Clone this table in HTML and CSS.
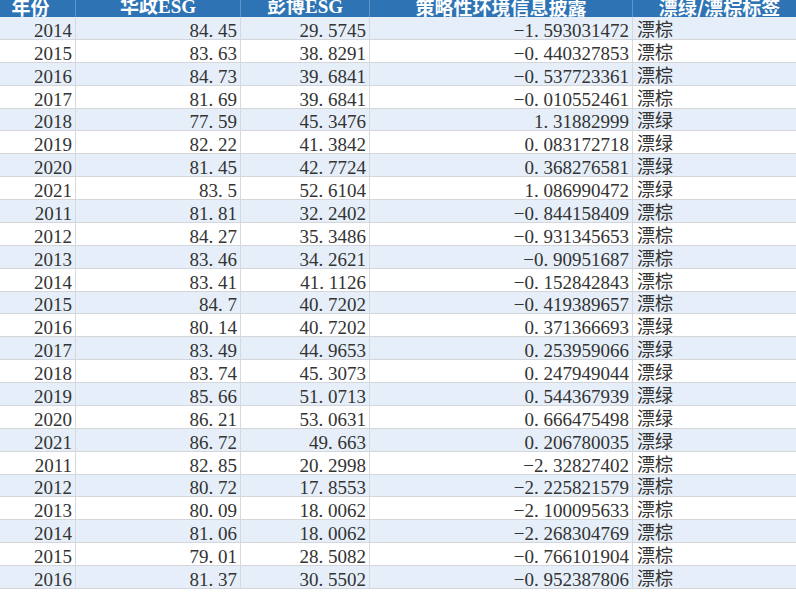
FILE: index.html
```html
<!DOCTYPE html>
<html lang="zh">
<head>
<meta charset="utf-8">
<title>ESG 表</title>
<link rel="stylesheet" href="styles.css">
</head>
<body>
<table class="sheet">
  <colgroup>
    <col class="c1"><col class="c2"><col class="c3"><col class="c4"><col class="c5">
  </colgroup>
  <thead>
    <tr>
      <th><div class="hd"><span>年份</span></div></th>
      <th><div class="hd"><span>华政<b>ESG</b></span></div></th>
      <th><div class="hd"><span>彭博<b>ESG</b></span></div></th>
      <th><div class="hd"><span>策略性环境信息披露</span></div></th>
      <th><div class="hd"><span>漂绿/漂棕标签</span></div></th>
    </tr>
  </thead>
  <tbody>
    <tr><td>2014</td><td>84<i>.</i>45</td><td>29<i>.</i>5745</td><td>−1<i>.</i>593031472</td><td class="t">漂棕</td></tr>
    <tr><td>2015</td><td>83<i>.</i>63</td><td>38<i>.</i>8291</td><td>−0<i>.</i>440327853</td><td class="t">漂棕</td></tr>
    <tr><td>2016</td><td>84<i>.</i>73</td><td>39<i>.</i>6841</td><td>−0<i>.</i>537723361</td><td class="t">漂棕</td></tr>
    <tr><td>2017</td><td>81<i>.</i>69</td><td>39<i>.</i>6841</td><td>−0<i>.</i>010552461</td><td class="t">漂棕</td></tr>
    <tr><td>2018</td><td>77<i>.</i>59</td><td>45<i>.</i>3476</td><td>1<i>.</i>31882999</td><td class="t">漂绿</td></tr>
    <tr><td>2019</td><td>82<i>.</i>22</td><td>41<i>.</i>3842</td><td>0<i>.</i>083172718</td><td class="t">漂绿</td></tr>
    <tr><td>2020</td><td>81<i>.</i>45</td><td>42<i>.</i>7724</td><td>0<i>.</i>368276581</td><td class="t">漂绿</td></tr>
    <tr><td>2021</td><td>83<i>.</i>5</td><td>52<i>.</i>6104</td><td>1<i>.</i>086990472</td><td class="t">漂绿</td></tr>
    <tr><td>2011</td><td>81<i>.</i>81</td><td>32<i>.</i>2402</td><td>−0<i>.</i>844158409</td><td class="t">漂棕</td></tr>
    <tr><td>2012</td><td>84<i>.</i>27</td><td>35<i>.</i>3486</td><td>−0<i>.</i>931345653</td><td class="t">漂棕</td></tr>
    <tr><td>2013</td><td>83<i>.</i>46</td><td>34<i>.</i>2621</td><td>−0<i>.</i>90951687</td><td class="t">漂棕</td></tr>
    <tr><td>2014</td><td>83<i>.</i>41</td><td>41<i>.</i>1126</td><td>−0<i>.</i>152842843</td><td class="t">漂棕</td></tr>
    <tr><td>2015</td><td>84<i>.</i>7</td><td>40<i>.</i>7202</td><td>−0<i>.</i>419389657</td><td class="t">漂棕</td></tr>
    <tr><td>2016</td><td>80<i>.</i>14</td><td>40<i>.</i>7202</td><td>0<i>.</i>371366693</td><td class="t">漂绿</td></tr>
    <tr><td>2017</td><td>83<i>.</i>49</td><td>44<i>.</i>9653</td><td>0<i>.</i>253959066</td><td class="t">漂绿</td></tr>
    <tr><td>2018</td><td>83<i>.</i>74</td><td>45<i>.</i>3073</td><td>0<i>.</i>247949044</td><td class="t">漂绿</td></tr>
    <tr><td>2019</td><td>85<i>.</i>66</td><td>51<i>.</i>0713</td><td>0<i>.</i>544367939</td><td class="t">漂绿</td></tr>
    <tr><td>2020</td><td>86<i>.</i>21</td><td>53<i>.</i>0631</td><td>0<i>.</i>666475498</td><td class="t">漂绿</td></tr>
    <tr><td>2021</td><td>86<i>.</i>72</td><td>49<i>.</i>663</td><td>0<i>.</i>206780035</td><td class="t">漂绿</td></tr>
    <tr><td>2011</td><td>82<i>.</i>85</td><td>20<i>.</i>2998</td><td>−2<i>.</i>32827402</td><td class="t">漂棕</td></tr>
    <tr><td>2012</td><td>80<i>.</i>72</td><td>17<i>.</i>8553</td><td>−2<i>.</i>225821579</td><td class="t">漂棕</td></tr>
    <tr><td>2013</td><td>80<i>.</i>09</td><td>18<i>.</i>0062</td><td>−2<i>.</i>100095633</td><td class="t">漂棕</td></tr>
    <tr><td>2014</td><td>81<i>.</i>06</td><td>18<i>.</i>0062</td><td>−2<i>.</i>268304769</td><td class="t">漂棕</td></tr>
    <tr><td>2015</td><td>79<i>.</i>01</td><td>28<i>.</i>5082</td><td>−0<i>.</i>766101904</td><td class="t">漂棕</td></tr>
    <tr><td>2016</td><td>81<i>.</i>37</td><td>30<i>.</i>5502</td><td>−0<i>.</i>952387806</td><td class="t">漂棕</td></tr>
  </tbody>
</table>
</body>
</html>
```

FILE: styles.css
```css
html, body {
  margin: 0;
  padding: 0;
  background: #ffffff;
  overflow: hidden;
}

.sheet {
  margin-left: -14px;
  width: 820px;
  table-layout: fixed;
  border-collapse: separate;
  border-spacing: 0;
  font-family: "Liberation Serif", "Noto Sans CJK SC", serif;
  font-size: 19px;
  color: #333333;
}

.c1 { width: 90px; }
.c2 { width: 165px; }
.c3 { width: 129px; }
.c4 { width: 263px; }
.c5 { width: 173px; }

.sheet th {
  height: 17px;
  padding: 0;
  background: #2e74b5;
  border-right: 1px solid #5f95cc;
  color: #ffffff;
  font-family: "Noto Sans CJK SC", sans-serif;
  font-weight: 700;
  font-size: 19px;
}

.sheet th:last-child { border-right: none; }

.hd {
  height: 17px;
  overflow: hidden;
  display: flex;
  justify-content: center;
  align-items: flex-end;
}

.hd span {
  display: block;
  line-height: 19px;
  margin-bottom: 1px;
  white-space: nowrap;
}

.hd b {
  font-family: "Liberation Serif", serif;
  font-weight: 700;
}

.sheet tbody tr { height: 22.875px; }

.sheet tbody tr:nth-child(odd) td { background: #e6eff9; }

.sheet td {
  padding: 0 3px 0 0;
  line-height: 17px;
  vertical-align: bottom;
  text-align: right;
  white-space: nowrap;
  border-right: 1px solid #d6d9dd;
  border-bottom: 1px solid #d4d6d9;
}

.sheet td.t {
  text-align: left;
  padding: 0 0 0 4px;
  line-height: 21px;
  font-family: "Noto Sans CJK SC", sans-serif;
  font-size: 18px;
  border-right: none;
}

.sheet td i {
  display: inline-block;
  width: 0.5em;
  font-style: normal;
  text-align: left;
}
```
